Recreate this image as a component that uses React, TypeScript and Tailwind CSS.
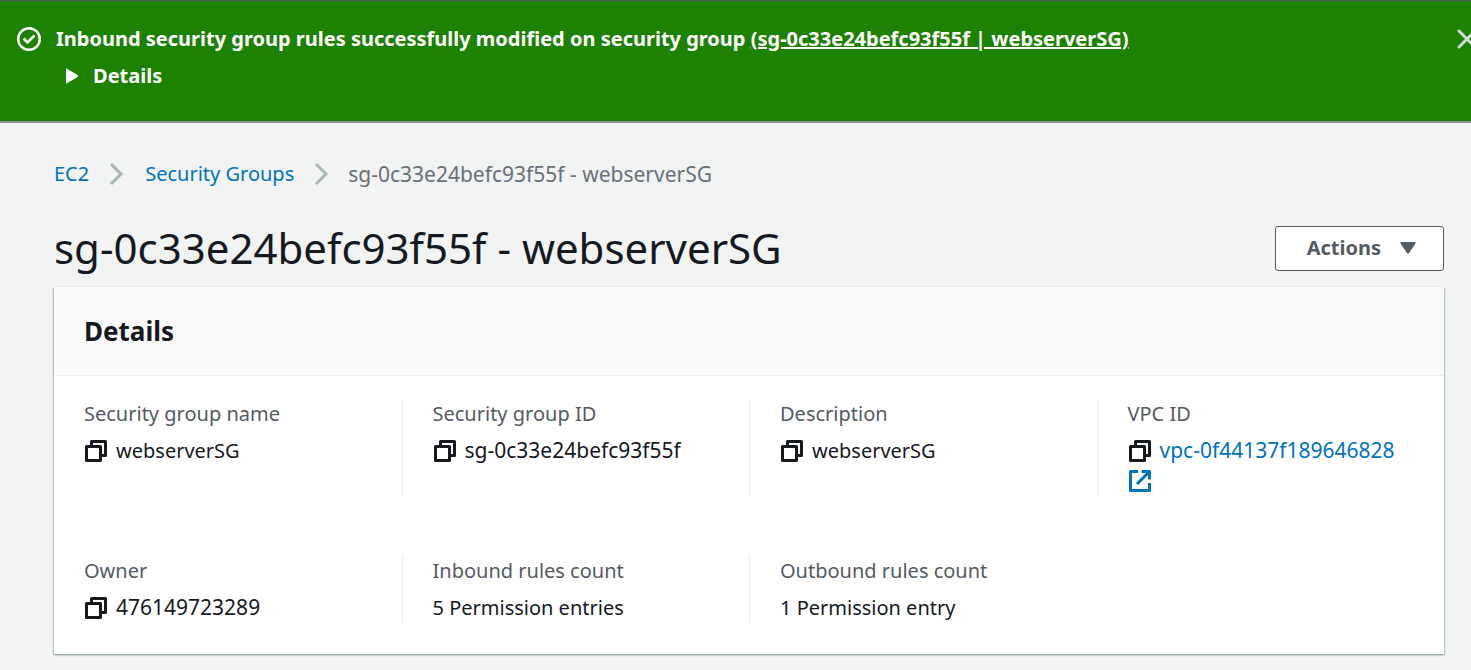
import type { ReactNode } from 'react';

function CopyIcon() {
  return (
    <svg className="h-6 w-6" viewBox="0 0 24 24" fill="none" stroke="#16191f" strokeWidth="3" strokeLinejoin="round" aria-hidden="true">
      <path d="M2.5 7.5h14v14h-14z" />
      <path d="M7.5 7V2.5h14v14H17.5" />
    </svg>
  );
}

function ExternalIcon() {
  return (
    <svg className="h-6 w-6" viewBox="0 0 24 24" fill="none" stroke="#0073bb" strokeWidth="3" strokeLinejoin="round" aria-hidden="true">
      <path d="M10 2.5H2.5v19h19V14" />
      <path d="M13.5 2.5h8v8M21 3L9 15" />
    </svg>
  );
}

function Chevron() {
  return (
    <svg className="h-6 w-4" viewBox="0 0 16 24" fill="none" stroke="#aab7b8" strokeWidth="3" aria-hidden="true">
      <path d="M2 2l10 10L2 22" />
    </svg>
  );
}

function Field({ label, copy, first, children }: { label: string; copy?: boolean; first?: boolean; children: ReactNode }) {
  return (
    <div className={first ? 'px-[30px]' : 'border-l border-[#eaeded] px-[30px]'}>
      <dt className="text-[#545b64]">{label}</dt>
      <dd className="mt-[7px]">
        {copy && (
          <button type="button" aria-label={`Copy ${label}`} className="mr-2 inline-block align-[-5px]">
            <CopyIcon />
          </button>
        )}
        {children}
      </dd>
    </div>
  );
}

export default function App() {
  return (
    <div className="min-h-screen bg-[#f2f3f3] pb-4 font-['Noto_Sans','Open_Sans',sans-serif] text-[20px] leading-[30px] text-[#16191f]">
      <header className="flex items-start overflow-hidden border-t border-b-2 border-t-[#545b64] border-b-[#879596] bg-[#1d8102] pt-[23px] pb-[30px] pl-4 font-bold text-white">
        <svg className="mt-[2px] h-[26px] w-[26px] shrink-0" viewBox="0 0 26 26" fill="none" stroke="white" aria-hidden="true">
          <circle cx="13" cy="13" r="10.8" strokeWidth="2.5" />
          <path d="M7.5 12.5l4 4 7-7" strokeWidth="2.6" />
        </svg>
        <div className="ml-[14px] flex-1">
          <p>
            Inbound security group rules successfully modified on security group{' '}
            <a href="#group" className="underline">(sg-0c33e24befc93f55f | webserverSG)</a>
          </p>
          <button type="button" className="mt-[7px] flex items-center gap-[15px] pl-[10px] font-bold">
            <svg className="h-4 w-3" viewBox="0 0 12 16" fill="white" aria-hidden="true">
              <path d="M0 1.5Q0 0 1.5 1l10 6q1 1 0 2l-10 6Q0 16 0 14.5z" />
            </svg>
            Details
          </button>
        </div>
        <button type="button" aria-label="Dismiss" className="-mr-2 mt-[3px]">
          <svg className="h-6 w-6" viewBox="0 0 24 24" fill="none" stroke="#d5dbdb" strokeWidth="3" strokeLinecap="round" aria-hidden="true">
            <path d="M4 4l16 16M20 4L4 20" />
          </svg>
        </button>
      </header>

      <main className="pr-[27px] pl-[54px]">
        <nav aria-label="Breadcrumb" className="flex items-center pt-9">
          <a href="#ec2" className="mr-5 text-[#0073bb]">EC2</a>
          <Chevron />
          <a href="#groups" className="mr-5 ml-5 text-[#0073bb]">Security Groups</a>
          <Chevron />
          <span className="ml-[18px] text-[21px] text-[#687078]">sg-0c33e24befc93f55f - webserverSG</span>
        </nav>

        <div className="mt-[31px] flex items-center justify-between">
          <h1 className="text-[42px] leading-[56px]">sg-0c33e24befc93f55f - webserverSG</h1>
          <button type="button" className="flex h-[45px] items-center gap-[19px] rounded-[3px] border border-[#545b64] bg-white pr-[27px] pl-[31px] font-bold text-[#545b64]">
            Actions
            <svg className="h-3 w-4" viewBox="0 0 16 12" fill="#545b64" aria-hidden="true">
              <path d="M1.5 0h13q1.5 0 1 1.5L9 11q-1 1.5-2 0L.5 1.5Q0 0 1.5 0z" />
            </svg>
          </button>
        </div>

        <section className="mt-[11px] bg-white shadow-[0_1px_2px_0_#879596,1px_1px_1px_0_#d5dbdb,-1px_1px_1px_0_#d5dbdb]">
          <h2 className="border-b border-[#eaeded] bg-[#fafafa] px-[30px] py-[26px] text-[26px] leading-9 font-bold">Details</h2>
          <dl className="grid grid-cols-4 gap-y-[60px] pt-[23px] pb-[31px]">
            <Field label="Security group name" copy first>webserverSG</Field>
            <Field label="Security group ID" copy><span className="text-[21px] leading-none">sg-0c33e24befc93f55f</span></Field>
            <Field label="Description" copy>webserverSG</Field>
            <Field label="VPC ID" copy>
              <a href="#vpc" className="text-[21px] leading-none text-[#0073bb]">vpc-0f44137f189646828 <span className="inline-block align-[-5px]"><ExternalIcon /></span></a>
            </Field>
            <Field label="Owner" copy first><span className="text-[21px] leading-none">476149723289</span></Field>
            <Field label="Inbound rules count">5 Permission entries</Field>
            <Field label="Outbound rules count">1 Permission entry</Field>
          </dl>
        </section>
      </main>
    </div>
  );
}
